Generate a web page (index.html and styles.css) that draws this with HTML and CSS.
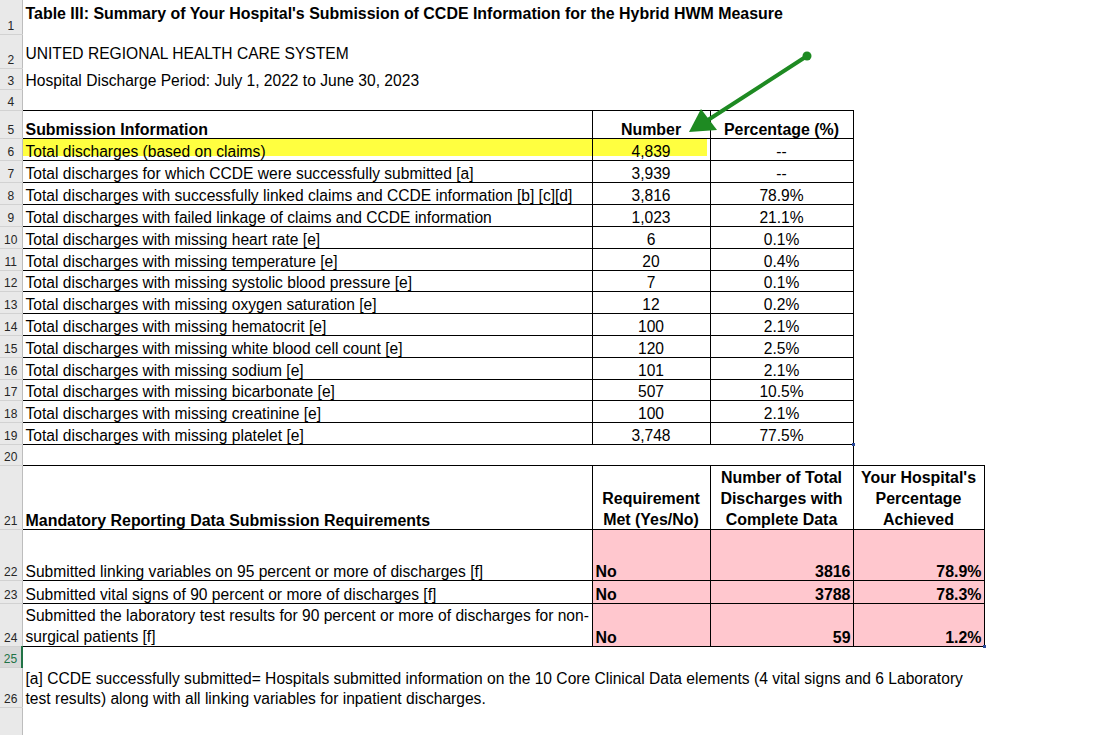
FILE: index.html
```html
<!DOCTYPE html>
<html>
<head>
<meta charset="utf-8">
<title>Table III</title>
<link rel="stylesheet" href="styles.css">
</head>
<body>
<div class="sheet">
<table class="grid">
<colgroup><col class="w-rh"><col class="w-a"><col class="w-b"><col class="w-c"><col class="w-d"><col class="w-e"></colgroup>
<tbody>
<tr class="r1"><th class="rh">1</th><td class="title" colspan="5">Table III: Summary of Your Hospital's Submission of CCDE Information for the Hybrid HWM Measure</td></tr>
<tr class="r2"><th class="rh">2</th><td class="pad6" colspan="5">UNITED REGIONAL HEALTH CARE SYSTEM</td></tr>
<tr class="r21"><th class="rh">3</th><td colspan="5">Hospital Discharge Period: July 1, 2022 to June 30, 2023</td></tr>
<tr class="r21"><th class="rh">4</th><td colspan="5"></td></tr>
<tr class="r5"><th class="rh">5</th><td class="b bold">Submission Information</td><td class="b bold ctr">Number</td><td class="b bold ctr">Percentage (%)</td><td></td><td></td></tr>
<tr class="r22"><th class="rh">6</th><td class="b hl">Total discharges (based on claims)</td><td class="b ctr hl hl-b">4,839</td><td class="b ctr">--</td><td></td><td></td></tr>
<tr class="r22"><th class="rh">7</th><td class="b">Total discharges for which CCDE were successfully submitted [a]</td><td class="b ctr">3,939</td><td class="b ctr">--</td><td></td><td></td></tr>
<tr class="r22"><th class="rh">8</th><td class="b">Total discharges with successfully linked claims and CCDE information [b] [c][d]</td><td class="b ctr">3,816</td><td class="b ctr">78.9%</td><td></td><td></td></tr>
<tr class="r22"><th class="rh">9</th><td class="b">Total discharges with failed linkage of claims and CCDE information</td><td class="b ctr">1,023</td><td class="b ctr">21.1%</td><td></td><td></td></tr>
<tr class="r22"><th class="rh">10</th><td class="b">Total discharges with missing heart rate [e]</td><td class="b ctr">6</td><td class="b ctr">0.1%</td><td></td><td></td></tr>
<tr class="r22"><th class="rh">11</th><td class="b">Total discharges with missing temperature [e]</td><td class="b ctr">20</td><td class="b ctr">0.4%</td><td></td><td></td></tr>
<tr class="r21"><th class="rh">12</th><td class="b">Total discharges with missing systolic blood pressure [e]</td><td class="b ctr">7</td><td class="b ctr">0.1%</td><td></td><td></td></tr>
<tr class="r22"><th class="rh">13</th><td class="b">Total discharges with missing oxygen saturation [e]</td><td class="b ctr">12</td><td class="b ctr">0.2%</td><td></td><td></td></tr>
<tr class="r22"><th class="rh">14</th><td class="b">Total discharges with missing hematocrit [e]</td><td class="b ctr">100</td><td class="b ctr">2.1%</td><td></td><td></td></tr>
<tr class="r22"><th class="rh">15</th><td class="b">Total discharges with missing white blood cell count [e]</td><td class="b ctr">120</td><td class="b ctr">2.5%</td><td></td><td></td></tr>
<tr class="r22"><th class="rh">16</th><td class="b">Total discharges with missing sodium [e]</td><td class="b ctr">101</td><td class="b ctr">2.1%</td><td></td><td></td></tr>
<tr class="r21"><th class="rh">17</th><td class="b">Total discharges with missing bicarbonate [e]</td><td class="b ctr">507</td><td class="b ctr">10.5%</td><td></td><td></td></tr>
<tr class="r22"><th class="rh">18</th><td class="b">Total discharges with missing creatinine [e]</td><td class="b ctr">100</td><td class="b ctr">2.1%</td><td></td><td></td></tr>
<tr class="r22"><th class="rh">19</th><td class="b">Total discharges with missing platelet [e]</td><td class="b ctr">3,748</td><td class="b ctr marked">77.5%<span class="mark"></span></td><td></td><td></td></tr>
<tr class="r21"><th class="rh">20</th><td class="tb"></td><td class="tb"></td><td class="tb br"></td><td></td><td></td></tr>
<tr class="r64"><th class="rh">21</th><td class="b bold">Mandatory Reporting Data Submission Requirements</td><td class="b bold ctr ml"><span class="shift">Requirement<br>Met (Yes/No)</span></td><td class="b bold ctr ml"><span class="shift">Number of Total<br>Discharges with<br>Complete Data</span></td><td class="b bold ctr ml"><span class="shift">Your Hospital's<br>Percentage<br>Achieved</span></td><td></td></tr>
<tr class="r51"><th class="rh">22</th><td class="b">Submitted linking variables on 95 percent or more of discharges [f]</td><td class="b bold bad">No</td><td class="b bold bad rt">3816</td><td class="b bold bad rt">78.9%</td><td></td></tr>
<tr class="r23"><th class="rh">23</th><td class="b">Submitted vital signs of 90 percent or more of discharges [f]</td><td class="b bold bad">No</td><td class="b bold bad rt">3788</td><td class="b bold bad rt">78.3%</td><td></td></tr>
<tr class="r43"><th class="rh">24</th><td class="b ml"><span class="shift">Submitted the laboratory test results for 90 percent or more of discharges for non-<br>surgical patients [f]</span></td><td class="b bold bad">No</td><td class="b bold bad rt">59</td><td class="b bold bad rt marked">1.2%<span class="mark"></span></td><td></td></tr>
<tr class="r21"><th class="rh sel">25</th><td colspan="5"></td></tr>
<tr class="r40"><th class="rh">26</th><td class="note" colspan="5"><span class="shift">[a] CCDE successfully submitted= Hospitals submitted information on the 10 Core Clinical Data elements (4 vital signs and 6 Laboratory<br>test results) along with all linking variables for inpatient discharges.</span></td></tr>
<tr class="rlast"><th class="rh"></th><td colspan="5"></td></tr>
</tbody>
</table>
<svg class="arrow" width="1111" height="735" viewBox="0 0 1111 735" aria-hidden="true">
<line x1="807" y1="56" x2="708" y2="120" stroke="#1e8a22" stroke-width="4" stroke-linecap="round"/>
<circle cx="807" cy="56" r="4.5" fill="#1e8a22"/>
<polygon points="689,132 701,109 717,130" fill="#1e8a22"/>
</svg>
</div>
</body>
</html>
```
FILE: styles.css
```css
html, body {
  margin: 0;
  padding: 0;
  background: #ffffff;
  overflow: hidden;
}

.sheet {
  position: relative;
  width: 1111px;
  height: 735px;
  overflow: hidden;
  font-family: "Liberation Sans", Arial, sans-serif;
  font-size: 15.6px;
  color: #000;
}

.grid {
  table-layout: fixed;
  width: 1111px;
  border-collapse: collapse;
  border-spacing: 0;
}

.w-rh { width: 22px; }
.w-a { width: 570px; }
.w-b { width: 118px; }
.w-c { width: 143px; }
.w-d { width: 131px; }
.w-e { width: 127px; }

.grid td {
  padding: 0 3px 0 3px;
  vertical-align: bottom;
  white-space: nowrap;
  line-height: 14.6px;
  overflow: visible;
}

.grid td.ml { line-height: 20.8px; }

.shift {
  display: block;
  position: relative;
  top: 2px;
}

.rh {
  background: #e9e9e9;
  border-right: 1px solid #bdbdbd;
  border-bottom: 1px solid #d2d2d2;
  font-family: "Liberation Sans", Arial, sans-serif;
  font-size: 12px;
  font-weight: normal;
  color: #262626;
  text-align: center;
  vertical-align: bottom;
  padding: 0 0 1px 0;
  line-height: 14px;
}

.rh.sel {
  background: #d9d9d9;
  color: #217346;
  border-right: 2px solid #217346;
}

.r1 { height: 34px; }
.r2 { height: 34px; }
.r5 { height: 28px; }
.r21 { height: 21px; }
.r22 { height: 22px; }
.r23 { height: 23px; }
.r40 { height: 40px; }
.r43 { height: 43px; }
.r51 { height: 51px; }
.r64 { height: 64px; }
.rlast { height: 40px; }

.grid td.title {
  font-weight: bold;
  font-size: 15.95px;
  vertical-align: top;
  padding-top: 5px;
  line-height: 17px;
}

.grid td.pad6 { padding-bottom: 6px; }

.b { border: 1px solid #000; }
.tb { border-top: 1px solid #000; border-bottom: 1px solid #000; }
.br { border-right: 1px solid #000; }

.bold { font-weight: bold; font-size: 15.95px; }
.ctr { text-align: center; }
.rt { text-align: right; }
.grid td.rt { padding-right: 2px; }

.bad { background: #ffc7ce; }

.hl {
  background-image: linear-gradient(#ffff40, #ffff40);
  background-repeat: no-repeat;
  background-size: 100% 17px;
  background-position: 0 0;
}
.hl-b { background-size: calc(100% - 3px) 17px; }

.marked { position: relative; }
.mark {
  position: absolute;
  right: -2px;
  bottom: -2px;
  width: 3px;
  height: 3px;
  background: #2a4a9c;
}

.grid td.note { line-height: 20px; padding-bottom: 0; }

.arrow {
  position: absolute;
  left: 0;
  top: 0;
  pointer-events: none;
}
```
